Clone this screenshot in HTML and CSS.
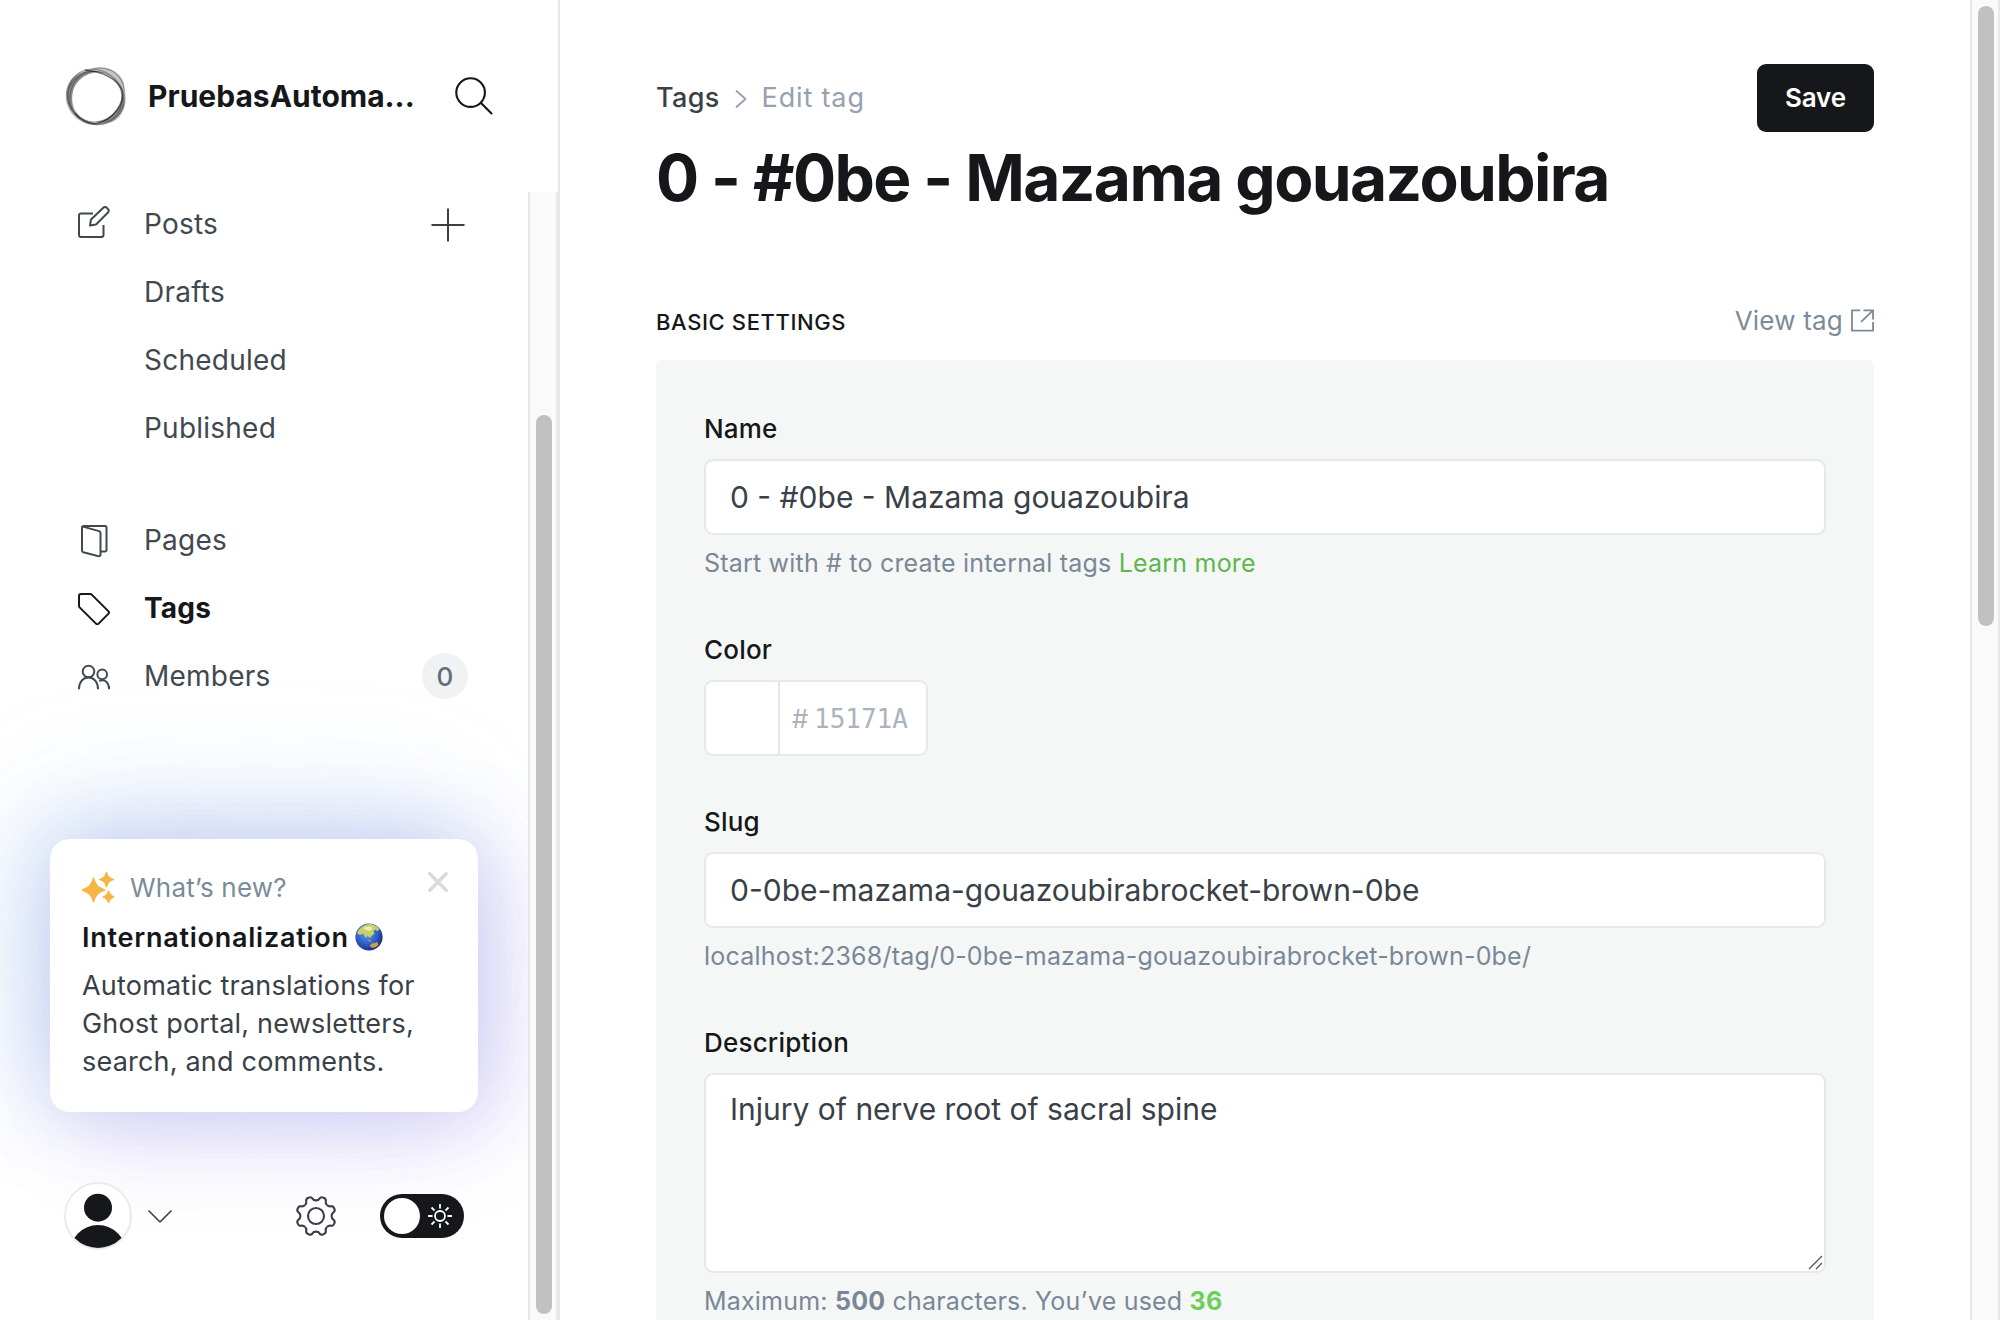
FILE: index.html
```html
<!DOCTYPE html>
<html lang="en">
<head>
<meta charset="utf-8">
<title>Edit tag</title>
<link rel="stylesheet" href="styles.css">
</head>
<body>
<div class="app">
  <aside class="sidebar">
    <header class="site">
      <svg class="site-logo" width="62" height="62" viewBox="0 0 62 62" fill="none" stroke="#111">
        <path fill="#222" fill-opacity=".26" stroke="none" fill-rule="evenodd" d="M25 4.500C36 -1 54 3 59 18C59.500 25 61.500 31 60.500 38C59 47 54 56 44 58C38 60 31 61 24 59.500C11 56 0 46 .8 29C2 14 13 6 25 4.500ZM31 7.500C18 9 8 18 7.500 30C6 46 17 56 30 57C45 57 56 45 57 31C56 18 46 7 31 7.500Z"/>
        <path fill="#000" fill-opacity=".3" stroke="none" d="M1.500 25C5 11 17 4 33 6.500C18 9 7.500 18 7 34C7 45 12 52 18 55C8 50 -1 39 1.500 25ZM57.500 28C57 44 46 55 31 57C44 60 54 54 59 42C60 36 59 32 57.500 28Z"/>
        <g stroke-width="1" opacity=".35">
          <ellipse cx="30" cy="31.500" rx="28.500" ry="26" transform="rotate(48 30 31.500)"/>
          <ellipse cx="32" cy="30" rx="28.500" ry="25.500" transform="rotate(-42 32 30)"/>
          <ellipse cx="31" cy="33" rx="28.500" ry="26.500" transform="rotate(18 31 33)"/>
        </g>
        <path stroke-width="1.500" opacity=".6" d="M20 5C30 6 49 9 57 25C60 38 48 55 32 58.500C24 59.500 15 55 10 48"/>
      </svg>
      <h2 class="site-name">PruebasAutoma...</h2>
      <svg class="site-search" width="38" height="38" viewBox="0 0 38 38" fill="none" stroke="#15171a" stroke-width="2.100">
        <circle cx="15.600" cy="15.600" r="14.300"/><path d="M26 26l10.500 10.500" stroke-linecap="round"/>
      </svg>
    </header>
    <div class="sidebar-body">
      <div class="scroll-area">
        <nav class="nav">
          <a class="nav-row">
            <svg class="nav-icon nav-icon-posts" viewBox="0 0 32 32"><path d="M15 7.500H3A2 2 0 0 0 1 9.500V29a2 2 0 0 0 2 2h20.500a2 2 0 0 0 2-2V19M12 19.500l1-6L25 2a2.600 2.600 0 0 1 4 0l1 1a2.400 2.400 0 0 1 0 3.500L18 18.500Z"/></svg>
            <span>Posts</span>
            <svg class="nav-plus" viewBox="0 0 34 34"><path d="M17 .5v33M.5 17h33"/></svg>
          </a>
          <a class="nav-row nav-sub"><span>Drafts</span></a>
          <a class="nav-row nav-sub"><span>Scheduled</span></a>
          <a class="nav-row nav-sub"><span>Published</span></a>
        </nav>
        <nav class="nav nav-second">
          <a class="nav-row">
            <svg class="nav-icon" viewBox="0 0 32 32"><path d="M4 2.500A1.500 1.500 0 0 1 5.500 1H27A1.500 1.500 0 0 1 28.500 2.500V25a1.500 1.500 0 0 1-1.500 1.500H22.500M4 2.500V25.500a1.800 1.800 0 0 0 1.300 1.700L20.500 31.200a1.600 1.600 0 0 0 2-1.600V8a2 2 0 0 0-1.400-1.900L5 1.600"/></svg>
            <span>Pages</span>
          </a>
          <a class="nav-row nav-active">
            <svg class="nav-icon" viewBox="0 0 32 32"><path d="M1 3A2 2 0 0 1 3 1H12.300a2 2 0 0 1 1.400.6L30.300 18.100a2 2 0 0 1 0 2.800L20.600 30.600a1.800 1.800 0 0 1-2.600 0L1.600 14.400A2 2 0 0 1 1 13Z"/></svg>
            <span>Tags</span>
          </a>
          <a class="nav-row">
            <svg class="nav-icon" viewBox="0 0 32 32"><circle cx="10.500" cy="10.500" r="5.800"/><path d="M1 28.300C1 20.800 5 16.500 10.500 16.500S20 20.800 20 28.300"/><circle cx="24.200" cy="13.400" r="4.800"/><path d="M21.300 20C27 17.600 31.200 21.800 31.200 28.300"/></svg>
            <span>Members</span>
            <b class="nav-count">0</b>
          </a>
        </nav>
        <section class="toast">
          <div class="toast-head">
            <svg width="32" height="31" viewBox="0 0 32 31" fill="#f6b545"><path d="M11.500 6C13.500 13 16 15.500 23 18C16 20.500 13.500 23 11.500 30C9.500 23 7 20.500 0 18C7 15.500 9.500 13 11.500 6ZM24.500 0C25.600 4.500 27 5.900 31.500 7.500C27 9 25.600 10.500 24.500 15C23.400 10.500 22 9 17.500 7.500C22 5.900 23.400 4.500 24.500 0ZM26.500 19C27.300 22.500 28.500 23.700 32 25C28.500 26.200 27.300 27.500 26.500 31C25.700 27.500 24.500 26.200 21 25C24.500 23.700 25.700 22.500 26.500 19Z" stroke="#f6b545" stroke-width="1.200" stroke-linejoin="round"/></svg>
            <span>What’s new?</span>
            <svg class="toast-close" width="20" height="20" viewBox="0 0 20 20" fill="none" stroke="#dadada" stroke-width="3.400" stroke-linecap="round"><path d="M1.800 1.800l16.400 16.400M18.200 1.800l-16.400 16.400"/></svg>
          </div>
          <h3 class="toast-title">Internationalization
            <svg width="28" height="28" viewBox="0 0 28 28">
              <defs><radialGradient id="sea" cx=".42" cy=".38" r=".62"><stop offset="0" stop-color="#5b9be6"/><stop offset=".6" stop-color="#2f5fcb"/><stop offset="1" stop-color="#20307f"/></radialGradient></defs>
              <circle cx="14" cy="14" r="13.600" fill="url(#sea)"/>
              <path fill="#c5cf6c" d="M3 8C6 3 11 .8 16 1C20 1.500 23 4 24.500 6.500L22 8.500L21 6.500L18.500 8L19.500 10.500L17 12.500L15 15L12.500 12.500L11 15L8 10.500L5 12L2 10.500Z"/>
              <path fill="#f0ee9f" d="M8 5C11 3 15 3 18 5L15 8L11 7Z"/>
              <path fill="#c5a24b" d="M15.500 21.500C18 19.300 20 20.500 22 18.700L23.500 21.500C22 24 19.500 25 17 24.500L15 23.500ZM13.500 16.500l3 1.500-.5 1-3-1.500Z"/>
            </svg>
          </h3>
          <p class="toast-text">Automatic translations for Ghost portal, newsletters, search, and comments.</p>
        </section>
        <footer class="user-bar">
          <svg class="avatar" width="68" height="68" viewBox="0 0 68 68">
            <defs><clipPath id="face"><circle cx="34" cy="34" r="32"/></clipPath></defs>
            <circle cx="34" cy="34" r="33" fill="#fff" stroke="#ebebed" stroke-width="2"/>
            <g clip-path="url(#face)" fill="#15171a"><circle cx="34" cy="25.700" r="14"/><circle cx="34" cy="71.500" r="28.400"/></g>
          </svg>
          <svg class="caret" width="24" height="13" viewBox="0 0 24 13" fill="none" stroke="#394047" stroke-width="1.600" stroke-linecap="round" stroke-linejoin="round"><path d="M1 1l11 11L23 1"/></svg>
          <svg class="gear" width="42" height="42" viewBox="-21 -21 42 42" fill="none" stroke="#394047" stroke-width="2.100">
            <defs><path id="tooth" d="M-5.970 -14.400C-4.200 -15.100 -3.600 -16 -3.400 -17.400C-3.100 -19.200 -2.100 -19.800 0 -19.800C2.100 -19.800 3.100 -19.200 3.400 -17.400C3.600 -16 4.200 -15.100 5.970 -14.400"/></defs>
            <circle r="8"/>
            <use href="#tooth" transform="rotate(22.500)"/><use href="#tooth" transform="rotate(67.500)"/><use href="#tooth" transform="rotate(112.500)"/><use href="#tooth" transform="rotate(157.500)"/><use href="#tooth" transform="rotate(202.500)"/><use href="#tooth" transform="rotate(247.500)"/><use href="#tooth" transform="rotate(292.500)"/><use href="#tooth" transform="rotate(337.500)"/>
          </svg>
          <div class="theme-switch">
            <i class="knob"></i>
            <svg width="24" height="24" viewBox="-12 -12 24 24" fill="none" stroke="#fff" stroke-width="1.800"><circle r="5"/><path d="M0-12v4.500M0 12v-4.500M-12 0h4.500M12 0h-4.500M-8.500-8.500l3 3M8.500 8.500l-3-3M-8.500 8.500l3-3M8.500-8.500l-3 3"/></svg>
          </div>
        </footer>
      </div>
      <div class="side-track"><i class="side-thumb"></i></div>
    </div>
  </aside>

  <main class="page">
    <header class="page-head">
      <div>
        <div class="crumbs">
          <a class="crumb">Tags</a>
          <svg class="crumb-sep" width="12" height="18" viewBox="0 0 12 18" fill="none" stroke="#95a1b1" stroke-width="1.800" stroke-linecap="round" stroke-linejoin="round"><path d="M1.500 1l9 8-9 8"/></svg>
          <span class="crumb-here">Edit tag</span>
        </div>
        <h1 class="page-title">0 - #0be - Mazama gouazoubira</h1>
      </div>
      <button class="save">Save</button>
    </header>
    <div class="section-head">
      <h4 class="section-title">BASIC SETTINGS</h4>
      <a class="view-tag">View tag
        <svg width="23" height="23" viewBox="0 0 24 23" fill="none" stroke="#7c8b9a" stroke-width="1.900"><path d="M9.500 1H1v21h22v-9M13 1h10v9.500M23 1L10.500 13"/></svg>
      </a>
    </div>
    <form class="panel">
      <label class="label">Name</label>
      <input class="field" value="0 - #0be - Mazama gouazoubira">
      <p class="hint">Start with # to create internal tags <a class="learn">Learn more</a></p>

      <label class="label">Color</label>
      <div class="color">
        <i class="swatch"></i>
        <span class="hash">#</span><span class="hex">15171A</span>
      </div>

      <label class="label">Slug</label>
      <input class="field" value="0-0be-mazama-gouazoubirabrocket-brown-0be">
      <p class="hint">localhost:2368/tag/0-0be-mazama-gouazoubirabrocket-brown-0be/</p>

      <label class="label">Description</label>
      <div class="area-wrap">
        <textarea class="field area">Injury of nerve root of sacral spine</textarea>
        <svg class="grip" width="15" height="15" viewBox="0 0 15 15" stroke="#555" stroke-width="1.300"><path d="M1 14L14 1M8 14l6-6"/></svg>
      </div>
      <p class="hint">Maximum: <b>500</b> characters. You’ve used <b class="used">36</b></p>
    </form>
  </main>
  <div class="page-track"><i class="page-thumb"></i></div>
</div>
</body>
</html>
```
FILE: styles.css
```css
* { box-sizing: border-box; }
body { margin: 0; font-family: Inter, sans-serif; color: #15171a; background: #fff; }
h1, h2, h3, h4, p { margin: 0; }
svg { display: block; flex: none; }

.app { display: flex; width: 2000px; height: 1320px; overflow: hidden; }

/* Sidebar */
.sidebar { display: flex; flex-direction: column; flex: none; width: 560px; border-right: 2px solid #e6e7e8; }
.site { display: flex; align-items: center; flex: none; height: 190px; padding: 2px 64px 0 65px; }
.site-name { margin-left: 21px; font-size: 30px; font-weight: 700; line-height: 40px; }
.site-search { margin-left: auto; margin-right: 1px; }
.sidebar-body { display: flex; flex: 1; min-height: 0; }
.scroll-area { display: flex; flex-direction: column; width: 528px; overflow: hidden; }

.nav-second { margin-top: 44px; }
.nav-row { display: flex; align-items: center; height: 68px; padding: 1px 60px 0 78px; font-size: 28px; letter-spacing: .23px; color: #414950; }
.nav-row span { padding-bottom: 1px; }
.nav-icon { width: 32px; height: 32px; margin-right: 34px; fill: none; stroke: #414950; stroke-width: 2; stroke-linejoin: round; }
.nav-icon-posts { margin-bottom: 5px; }
.nav-sub { padding-left: 144px; }
.nav-plus { width: 34px; height: 34px; margin-left: auto; margin-right: 3px; fill: none; stroke: #394047; stroke-width: 2; }
.nav-active { color: #15171a; font-weight: 700; }
.nav-active .nav-icon { stroke: #15171a; }
.nav-count { width: 46px; height: 46px; margin: 0 0 1px auto; border-radius: 50%; background: #f0f2f4; color: #626d79; font-size: 26px; font-weight: 500; line-height: 47px; text-align: center; }

.toast {
  flex: none; width: 428px; height: 273px; margin: 129px 0 0 50px; padding: 30px 32px; border-radius: 20px; background: #fff;
  box-shadow:
    -14px -14px 84px rgba(95, 170, 225, .22),
    14px 14px 84px rgba(145, 110, 230, .22),
    -24px -30px 140px rgba(120, 175, 235, .14),
    18px 14px 120px rgba(190, 130, 240, .12);
}
.toast-head { display: flex; align-items: center; height: 36px; font-size: 26px; letter-spacing: .2px; color: #7c8b9a; }
.toast-head span { margin-left: 16px; }
.toast-close { margin: -11px -2px 0 auto; }
.toast-title { display: flex; align-items: center; gap: 6px; height: 40px; margin-top: 12px; font-size: 27px; font-weight: 600; letter-spacing: .75px; }
.toast-text { margin-top: 10px; font-size: 27px; line-height: 38.2px; letter-spacing: .2px; color: #394047; width: 350px; }

.user-bar { position: relative; display: flex; align-items: center; height: 68px; margin-top: 70px; padding: 0 64px; flex: none; }
.caret { margin-left: 16px; }
.gear { margin-left: auto; }
.theme-switch { display: flex; align-items: center; justify-content: space-between; width: 84px; height: 44px; margin-left: 43px; padding: 0 12px 0 4px; border-radius: 22px; background: #15171a; }
.knob { width: 36px; height: 36px; border-radius: 50%; background: #fff; }

.side-track { width: 30px; margin-top: 2px; padding: 223px 4px 6px 6px; border: solid #e8e8e8; border-width: 0 2px; background: #fafafa; }
.side-thumb { display: block; height: 100%; width: 16px; border-radius: 8px; background: #c1c1c1; }

/* Page */
.page { flex: 1; min-width: 0; padding: 64px 96px 0; }
.page-head { display: flex; justify-content: space-between; align-items: flex-start; }
.crumbs { display: flex; align-items: center; height: 66px; font-size: 27px; }
.crumb { margin-right: 15px; font-weight: 500; letter-spacing: .33px; color: #394047; }
.crumb-sep { margin-top: 4px; }
.crumb-here { margin-left: 15px; letter-spacing: .85px; color: #95a1b1; }
.page-title { font-size: 64px; font-weight: 700; line-height: 80px; letter-spacing: -1.6px; margin-top: 8px; }
.save { width: 117px; height: 68px; padding: 0 0 2px; border: 0; border-radius: 9px; background: #15171a; color: #fff; font: 600 26px Inter, sans-serif; letter-spacing: -.1px; }
.section-head { display: flex; align-items: center; justify-content: space-between; height: 42px; margin: 82px 0 18px; }
.section-title { padding-top: 2px; font-size: 22px; font-weight: 500; letter-spacing: .61px; }
.view-tag { display: flex; align-items: center; gap: 8px; padding-bottom: 1px; font-size: 26px; letter-spacing: .2px; color: #7c8b9a; }

.panel { display: flex; flex-direction: column; height: 1000px; padding: 49px 48px 0; border-radius: 6px; background: #f4f7f6; }
.label { flex: none; height: 40px; margin-bottom: 10px; font-size: 26px; font-weight: 500; line-height: 40px; letter-spacing: .2px; }
.field { display: block; flex: none; width: 1122px; height: 76px; padding: 0 24px; border: 2px solid #e6e9e9; border-radius: 9px; background: #fff; color: #394047; font: 400 30px Inter, sans-serif; outline: 0; }
.hint { flex: none; height: 40px; margin: 8px 0 47px; font-size: 25px; line-height: 40px; letter-spacing: .2px; color: #7a8797; }
.learn { color: #5cb84a; }
.used { color: #6fce59; }
.color { display: flex; flex: none; align-items: center; width: 224px; height: 76px; margin-bottom: 46px; border: 2px solid #e6e9e9; border-radius: 9px; background: #fff; color: #abb4be; font-size: 26px; }
.swatch { width: 74px; height: 100%; border-right: 2px solid #e6e9e9; }
.hash { margin-left: 12px; width: 22px; }
.hex { padding-top: 1px; font-family: "DejaVu Sans Mono", monospace; font-size: 26px; }
.area-wrap { position: relative; flex: none; height: 200px; }
.area { height: 200px; padding: 12px 24px; line-height: 45px; resize: none; }
.grip { position: absolute; right: 3px; bottom: 3px; }

.page-track { flex: none; width: 30px; padding: 6px 4px 0 6px; border: solid #e8e8e8; border-width: 0 2px; background: #fafafa; }
.page-thumb { display: block; width: 16px; height: 620px; border-radius: 8px; background: #c1c1c1; }
```
